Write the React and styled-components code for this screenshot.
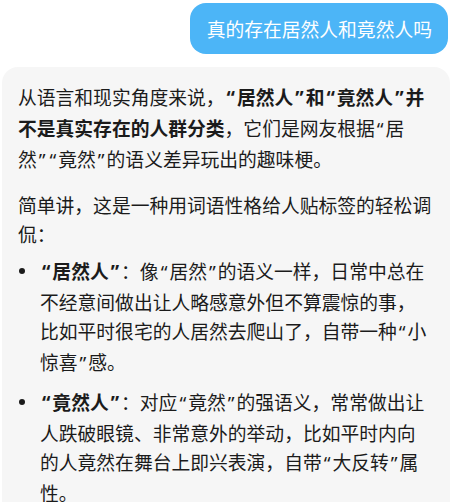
import React from "react";
import styled, { createGlobalStyle } from "styled-components";

const GlobalStyle = createGlobalStyle`
html, body {
    margin: 0;
    padding: 0;
    background: #ffffff;
}
body {
    font-family: "Noto Sans CJK SC", "Noto Sans", sans-serif;
    color: #1b1b1b;
    -webkit-font-smoothing: antialiased;
}
`;

const Page = styled.div`
width: 454px;
height: 502px;
overflow: hidden;
display: flex;
flex-direction: column;
`;

const UserRow = styled.div`
display: flex;
justify-content: flex-end;
padding: 3px 6px 0 0;
`;

const UserBubble = styled.div`
background: #4cb5f7;
color: #ffffff;
font-size: 18.8px;
line-height: 51px;
padding: 0 16px 0 17px;
border-radius: 16px;
`;

const Answer = styled.div`
margin: 13px 4px 0 2px;
background: #f6f6f6;
border-radius: 16px 16px 0 0;
padding: 15px 17px 0 16px;
flex: 1;
font-size: 18.8px;
line-height: 29px;
`;

const Para = styled.p`
margin: 0 0 ${(p) => (p.$beforeList ? "8px" : "15px")} 0;
`;

const Strong = styled.b`
font-weight: 700;
`;

// latin quotes are narrower than the CJK full-width ones, like the reference
const Quote = styled.span`
font-family: "Noto Sans", "Noto Sans CJK SC", sans-serif;
padding: 0 2px;
`;

const List = styled.ul`
margin: 0;
padding: 0;
list-style: none;
display: flex;
flex-direction: column;
gap: 9px;
`;

const Item = styled.li`
display: flex;
gap: 15px;
`;

const Dot = styled.span`
flex: none;
width: 6px;
height: 6px;
border-radius: 50%;
background: #1b1b1b;
margin: 12px 0 0 1px;
`;

const ItemText = styled.div`
flex: 1;
`;

const q = (str) =>
    str.split(/([“”])/).map((part, i) =>
        part === "“" || part === "”" ? <Quote key={i}>{part}</Quote> : part
    );

export default function App() {
    return (
        <Page>
            <GlobalStyle />
            <UserRow>
                <UserBubble>真的存在居然人和竟然人吗</UserBubble>
            </UserRow>
            <Answer>
                <Para>
                    从语言和现实角度来说，
                    <Strong>{q("“居然人”和“竟然人”并不是真实存在的人群分类")}</Strong>
                    {q("，它们是网友根据“居然”“竟然”的语义差异玩出的趣味梗。")}
                </Para>
                <Para $beforeList>简单讲，这是一种用词语性格给人贴标签的轻松调侃：</Para>
                <List>
                    <Item>
                        <Dot />
                        <ItemText>
                            <Strong>{q("“居然人”")}</Strong>
                            {q("：像“居然”的语义一样，日常中总在不经意间做出让人略感意外但不算震惊的事，比如平时很宅的人居然去爬山了，自带一种“小惊喜”感。")}
                        </ItemText>
                    </Item>
                    <Item>
                        <Dot />
                        <ItemText>
                            <Strong>{q("“竟然人”")}</Strong>
                            {q("：对应“竟然”的强语义，常常做出让人跌破眼镜、非常意外的举动，比如平时内向的人竟然在舞台上即兴表演，自带“大反转”属性。")}
                        </ItemText>
                    </Item>
                </List>
            </Answer>
        </Page>
    );
}
